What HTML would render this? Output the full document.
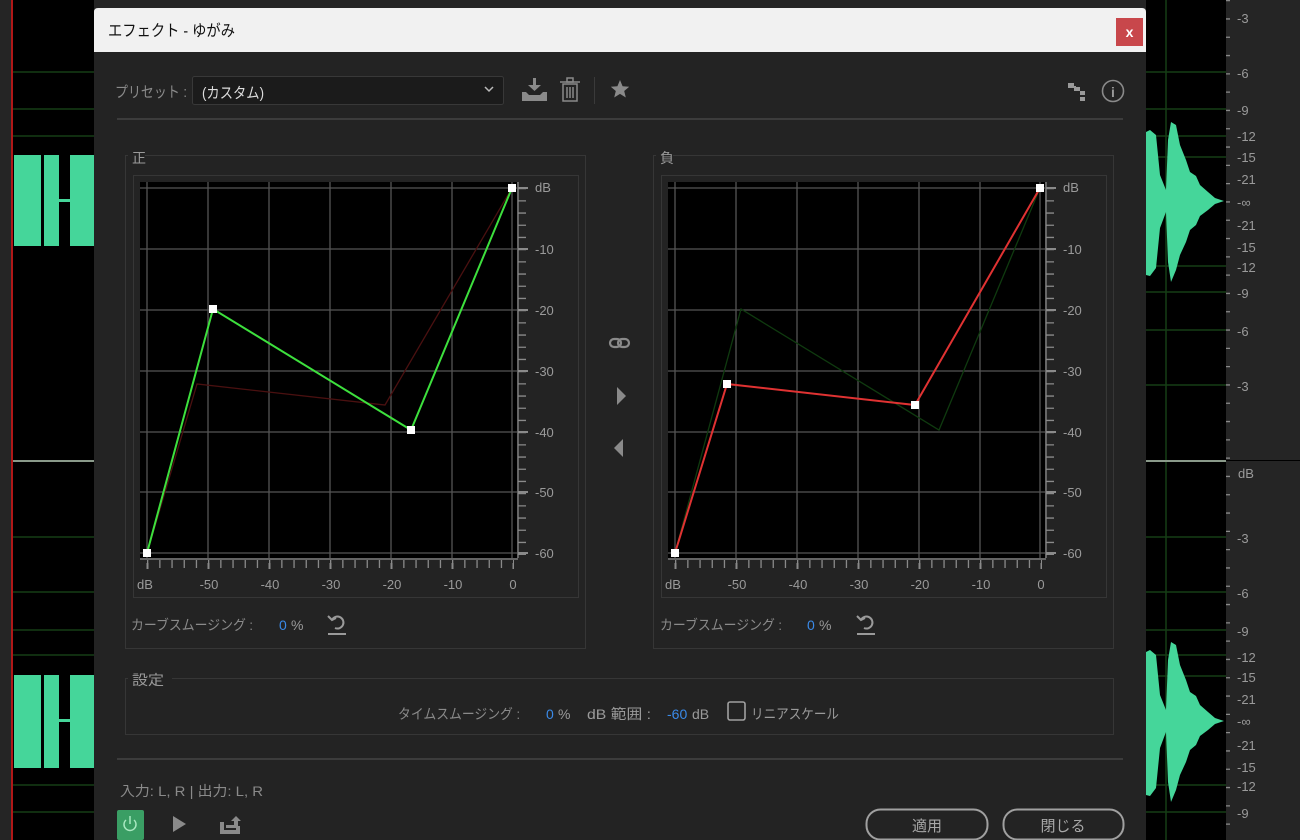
<!DOCTYPE html>
<html><head><meta charset="utf-8"><style>
html,body{margin:0;padding:0;width:1300px;height:840px;overflow:hidden;background:#252525}
svg{display:block}
text{font-family:"Liberation Sans","Noto Sans CJK JP",sans-serif}
</style></head><body>
<svg width="1300" height="840" viewBox="0 0 1300 840" xmlns="http://www.w3.org/2000/svg">
<defs>
<g id="grid">
  <rect x="140" y="182" width="377" height="376" fill="#000"/>
  <g stroke="#555" stroke-width="1.3">
    <line x1="147" y1="182" x2="147" y2="558"/><line x1="208" y1="182" x2="208" y2="558"/>
    <line x1="269" y1="182" x2="269" y2="558"/><line x1="330" y1="182" x2="330" y2="558"/>
    <line x1="391" y1="182" x2="391" y2="558"/><line x1="452" y1="182" x2="452" y2="558"/>
    <line x1="512" y1="182" x2="512" y2="558"/>
    <line x1="140" y1="188" x2="517" y2="188"/><line x1="140" y1="249" x2="517" y2="249"/>
    <line x1="140" y1="310" x2="517" y2="310"/><line x1="140" y1="371" x2="517" y2="371"/>
    <line x1="140" y1="432" x2="517" y2="432"/><line x1="140" y1="492" x2="517" y2="492"/>
    <line x1="140" y1="553" x2="517" y2="553"/>
  </g>
  <g stroke="#8a8a8a">
    <line x1="518" y1="182" x2="518" y2="558" stroke-width="1.3"/>
    <line x1="140" y1="559" x2="518" y2="559" stroke-width="1.3"/>
    <line x1="522" y1="188" x2="522" y2="555" stroke-width="8" stroke-dasharray="1.3 10.9"/>
    <line x1="147" y1="564" x2="514" y2="564" stroke-width="8" stroke-dasharray="1.3 10.9"/>
    <line x1="146.5" y1="566" x2="514" y2="566" stroke-width="6" stroke-dasharray="2 59"/>
    <line x1="518" y1="188" x2="528" y2="188" stroke-width="2"/>
    <line x1="518" y1="249" x2="528" y2="249" stroke-width="2"/>
    <line x1="518" y1="310" x2="528" y2="310" stroke-width="2"/>
    <line x1="518" y1="371" x2="528" y2="371" stroke-width="2"/>
    <line x1="518" y1="432" x2="528" y2="432" stroke-width="2"/>
    <line x1="518" y1="492" x2="528" y2="492" stroke-width="2"/>
    <line x1="518" y1="553" x2="528" y2="553" stroke-width="2"/>
  </g>
  <g fill="#9a9a9a" font-size="13">
    <text x="535" y="192">dB</text><text x="535" y="254">-10</text><text x="535" y="315">-20</text>
    <text x="535" y="376">-30</text><text x="535" y="437">-40</text><text x="535" y="497">-50</text>
    <text x="535" y="558">-60</text>
    <g text-anchor="middle"><text x="145" y="589">dB</text><text x="209" y="589">-50</text><text x="270" y="589">-40</text>
    <text x="331" y="589">-30</text><text x="392" y="589">-20</text><text x="453" y="589">-10</text><text x="513" y="589">0</text></g>
  </g>
</g>
</defs>

<!-- background left -->
<rect x="13" y="0" width="81" height="840" fill="#000"/>
<rect x="11" y="0" width="2" height="840" fill="#b01818"/>
<g stroke="#163d16" stroke-width="1.5">
  <line x1="13" y1="72" x2="94" y2="72"/><line x1="13" y1="109" x2="94" y2="109"/><line x1="13" y1="136" x2="94" y2="136"/>
  <line x1="13" y1="537" x2="94" y2="537"/><line x1="13" y1="592" x2="94" y2="592"/><line x1="13" y1="630" x2="94" y2="630"/>
  <line x1="13" y1="655" x2="94" y2="655"/><line x1="13" y1="785" x2="94" y2="785"/><line x1="13" y1="812" x2="94" y2="812"/>
</g>
<rect x="13" y="460" width="81" height="2" fill="#8a9a8a"/>
<g fill="#45d69a">
  <rect x="14" y="155" width="27" height="91"/><rect x="44" y="155" width="15" height="91"/><rect x="70" y="155" width="24" height="91"/>
  <rect x="59" y="199" width="11" height="3"/>
  <rect x="14" y="675" width="27" height="93"/><rect x="44" y="675" width="15" height="93"/><rect x="70" y="675" width="24" height="93"/>
  <rect x="59" y="719" width="11" height="3"/>
</g>
<!-- background right -->
<rect x="1146" y="0" width="80" height="840" fill="#000"/>
<g stroke="#163d16" stroke-width="1.5">
  <line x1="1166" y1="0" x2="1166" y2="840"/>
  <line x1="1146" y1="72" x2="1226" y2="72"/><line x1="1146" y1="109" x2="1226" y2="109"/><line x1="1146" y1="136" x2="1226" y2="136"/>
  <line x1="1146" y1="157" x2="1226" y2="157"/><line x1="1146" y1="266" x2="1226" y2="266"/><line x1="1146" y1="292" x2="1226" y2="292"/>
  <line x1="1146" y1="330" x2="1226" y2="330"/><line x1="1146" y1="385" x2="1226" y2="385"/>
  <line x1="1146" y1="537" x2="1226" y2="537"/><line x1="1146" y1="592" x2="1226" y2="592"/><line x1="1146" y1="630" x2="1226" y2="630"/>
  <line x1="1146" y1="655" x2="1226" y2="655"/><line x1="1146" y1="676" x2="1226" y2="676"/><line x1="1146" y1="785" x2="1226" y2="785"/><line x1="1146" y1="812" x2="1226" y2="812"/>
</g>
<rect x="1146" y="460" width="80" height="2" fill="#8a9a8a"/>
<rect x="1226" y="460" width="74" height="1" fill="#000"/>
<g fill="#45d69a">
  <path d="M1146 132 L1150 130 L1156 135 L1160 175 L1166 190 L1168 140 L1171 122 L1176 125 L1180 145 L1186 160 L1190 172 L1196 176 L1200 185 L1208 192 L1215 198 L1224 201 L1215 204 L1208 210 L1200 216 L1196 225 L1190 230 L1186 242 L1180 255 L1176 270 L1171 282 L1168 262 L1166 212 L1160 228 L1156 268 L1150 276 L1146 275 Z"/>
  <path d="M1146 652 L1150 650 L1156 655 L1160 695 L1166 710 L1168 660 L1171 642 L1176 645 L1180 665 L1186 680 L1190 692 L1196 696 L1200 705 L1208 712 L1215 718 L1224 721 L1215 724 L1208 730 L1200 736 L1196 745 L1190 750 L1186 762 L1180 775 L1176 790 L1171 802 L1168 782 L1166 732 L1160 748 L1156 788 L1150 796 L1146 795 Z"/>
</g>
<g stroke="#8a8a8a" stroke-width="4">
  <line x1="1228" y1="0" x2="1228" y2="840" stroke-dasharray="1.3 17"/>
</g>
<g fill="#9a9a9a" font-size="13">
  <text x="1237" y="23">-3</text><text x="1237" y="78">-6</text><text x="1237" y="115">-9</text><text x="1237" y="141">-12</text>
  <text x="1237" y="162">-15</text><text x="1237" y="184">-21</text><text x="1237" y="207">-∞</text><text x="1237" y="230">-21</text>
  <text x="1237" y="252">-15</text><text x="1237" y="272">-12</text><text x="1237" y="298">-9</text><text x="1237" y="336">-6</text>
  <text x="1237" y="391">-3</text><text x="1238" y="478">dB</text>
  <text x="1237" y="543">-3</text><text x="1237" y="598">-6</text><text x="1237" y="636">-9</text><text x="1237" y="662">-12</text>
  <text x="1237" y="682">-15</text><text x="1237" y="704">-21</text><text x="1237" y="726">-∞</text><text x="1237" y="750">-21</text>
  <text x="1237" y="772">-15</text><text x="1237" y="791">-12</text><text x="1237" y="818">-9</text>
</g>

<!-- dialog -->
<rect x="94" y="8" width="1052" height="840" rx="4" fill="#232323"/>
<path d="M94 52 V12 Q94 8 98 8 H1142 Q1146 8 1146 12 V52 Z" fill="#f1f1f1"/>
<text x="108" y="36" font-size="16" fill="#111" textLength="127" lengthAdjust="spacingAndGlyphs">エフェクト - ゆがみ</text>
<rect x="1116" y="18" width="27" height="28" fill="#c8474b"/>
<text x="1129.5" y="37" font-size="14" font-weight="bold" fill="#fff" text-anchor="middle">x</text>

<text x="115" y="97" font-size="15" fill="#8a8a8a" textLength="72" lengthAdjust="spacingAndGlyphs">プリセット :</text>
<rect x="192.5" y="76.5" width="311" height="28" rx="2" fill="#1b1b1b" stroke="#383838"/>
<text x="202" y="98" font-size="15" fill="#ddd" textLength="62" lengthAdjust="spacingAndGlyphs">(カスタム)</text>
<path d="M485 87 l4 4 l4 -4" stroke="#bbb" stroke-width="1.5" fill="none"/>
<g fill="#8a8a8a">
  <rect x="533" y="78" width="3" height="9"/><path d="M528 85 h13 l-6.5 6 z"/>
  <path d="M522 92 h4 l3 3 h11 l3 -3 h4 v9 h-25 z"/>
</g>
<g stroke="#8a8a8a" fill="none" stroke-width="1.5">
  <rect x="563" y="84" width="14" height="17"/><line x1="560" y1="82" x2="580" y2="82"/><rect x="567" y="78" width="6" height="4"/>
  <line x1="567" y1="87" x2="567" y2="98"/><line x1="570" y1="87" x2="570" y2="98"/><line x1="573" y1="87" x2="573" y2="98"/>
</g>
<rect x="594" y="77" width="1" height="27" fill="#3a3a3a"/>
<path d="M620 80 l2.6 6.2 6.6 .5 -5 4.3 1.6 6.5 -5.8 -3.6 -5.8 3.6 1.6 -6.5 -5 -4.3 6.6 -.5z" fill="#8a8a8a"/>
<g fill="#9a9a9a"><rect x="1068" y="83" width="6" height="5"/><rect x="1075" y="87" width="5" height="4"/><rect x="1080" y="91" width="5" height="4"/><rect x="1080" y="97" width="5" height="4"/><rect x="1074" y="86" width="2" height="5"/></g>
<circle cx="1113" cy="91" r="10.5" fill="none" stroke="#8a8a8a" stroke-width="1.6"/>
<text x="1113" y="97" font-size="14" font-weight="bold" fill="#9a9a9a" text-anchor="middle" font-family="Liberation Serif">i</text>
<rect x="117" y="118" width="1006" height="2" fill="#3c3c3c"/>

<g fill="none" stroke="#363636" stroke-width="1">
  <path d="M145 155.5 H585.5 V648.5 H125.5 V155.5 H128"/>
  <rect x="133.5" y="175.5" width="445" height="422"/>
  <path d="M673 155.5 H1113.5 V648.5 H653.5 V155.5 H656"/>
  <rect x="661.5" y="175.5" width="445" height="422"/>
  <path d="M172 678.5 H1113.5 V734.5 H125.5 V678.5 H128"/>
</g>
<text x="132" y="163" font-size="14" fill="#9a9a9a">正</text>
<text x="660" y="163" font-size="14" fill="#9a9a9a">負</text>
<text x="132" y="685" font-size="14" fill="#9a9a9a" textLength="32" lengthAdjust="spacingAndGlyphs">設定</text>

<use href="#grid"/>
<use href="#grid" transform="translate(528,0)"/>

<polyline points="147,553 197,384 385,405 512,188" fill="none" stroke="#4a1010" stroke-width="1.3"/>
<polyline points="147,553 213,309 411,430 512,188" fill="none" stroke="#3de03d" stroke-width="2"/>
<g fill="#fff"><rect x="143" y="549" width="8" height="8"/><rect x="209" y="305" width="8" height="8"/><rect x="407" y="426" width="8" height="8"/><rect x="508" y="184" width="8" height="8"/></g>
<polyline points="675,553 741,309 939,430 1040,188" fill="none" stroke="#0f3a0f" stroke-width="1.3"/>
<polyline points="675,553 727,384 915,405 1040,188" fill="none" stroke="#e03232" stroke-width="2"/>
<g fill="#fff"><rect x="671" y="549" width="8" height="8"/><rect x="723" y="380" width="8" height="8"/><rect x="911" y="401" width="8" height="8"/><rect x="1036" y="184" width="8" height="8"/></g>

<g fill="none" stroke="#8a8a8a" stroke-width="2.2">
  <rect x="610" y="339" width="11" height="8" rx="4"/><rect x="618" y="339" width="11" height="8" rx="4"/>
</g>
<path d="M617 387 l9 9 l-9 9 z" fill="#8a8a8a"/>
<path d="M623 439 l-9 9 l9 9 z" fill="#8a8a8a"/>

<g font-size="14">
  <text x="131" y="630" fill="#8a8a8a" textLength="122" lengthAdjust="spacingAndGlyphs">カーブスムージング :</text>
  <text x="279" y="630" fill="#3a8ae8">0</text><text x="291" y="630" fill="#9a9a9a">%</text>
  <text x="660" y="630" fill="#8a8a8a" textLength="122" lengthAdjust="spacingAndGlyphs">カーブスムージング :</text>
  <text x="807" y="630" fill="#3a8ae8">0</text><text x="819" y="630" fill="#9a9a9a">%</text>
</g>
<g fill="none" stroke="#9a9a9a" stroke-width="2">
  <path d="M332 620 a6 6 0 1 1 3 8"/><path d="M328 616 l4 4 l4 -2" /><line x1="328" y1="634" x2="346" y2="634"/>
  <path d="M861 620 a6 6 0 1 1 3 8"/><path d="M857 616 l4 4 l4 -2" /><line x1="857" y1="634" x2="875" y2="634"/>
</g>

<g font-size="14">
  <text x="398" y="719" fill="#8a8a8a" textLength="122" lengthAdjust="spacingAndGlyphs">タイムスムージング :</text>
  <text x="546" y="719" fill="#3a8ae8">0</text><text x="558" y="719" fill="#9a9a9a">%</text>
  <text x="587" y="719" fill="#9a9a9a" textLength="64" lengthAdjust="spacingAndGlyphs">dB 範囲 :</text>
  <text x="667" y="719" fill="#3a8ae8">-60</text><text x="692" y="719" fill="#9a9a9a">dB</text>
  <text x="751" y="719" fill="#9a9a9a" textLength="88" lengthAdjust="spacingAndGlyphs">リニアスケール</text>
</g>
<rect x="728" y="702" width="17" height="18" rx="2" fill="none" stroke="#a0a0a0" stroke-width="1.6"/>
<rect x="117" y="758" width="1006" height="2" fill="#3c3c3c"/>

<text x="120" y="796" font-size="14" fill="#8a8a8a" textLength="143" lengthAdjust="spacingAndGlyphs">入力: L, R | 出力: L, R</text>
<rect x="117" y="810" width="27" height="30" rx="2" fill="#3a9e64"/>
<g fill="none" stroke="#a8e8c0" stroke-width="1.5"><path d="M126 820 a6 6 0 1 0 8 0"/><line x1="130" y1="816" x2="130" y2="824"/></g>
<path d="M173 816 l13 8 l-13 8 z" fill="#8a8a8a"/>
<g fill="#8a8a8a"><path d="M220 822 h4 v8 h12 v-4 h4 v8 h-20 z"/><path d="M226 825 h8 v-4 h-3 l5 -5 5 5 h-3 v7 h-12z"/></g>

<rect x="866.5" y="809.5" width="121" height="30" rx="14" fill="none" stroke="#a0a0a0" stroke-width="2"/>
<text x="927" y="831" font-size="15" fill="#a8a8a8" text-anchor="middle">適用</text>
<rect x="1003.5" y="809.5" width="120" height="30" rx="14" fill="none" stroke="#a0a0a0" stroke-width="2"/>
<text x="1063" y="831" font-size="15" fill="#a8a8a8" text-anchor="middle">閉じる</text>
</svg>
</body></html>
